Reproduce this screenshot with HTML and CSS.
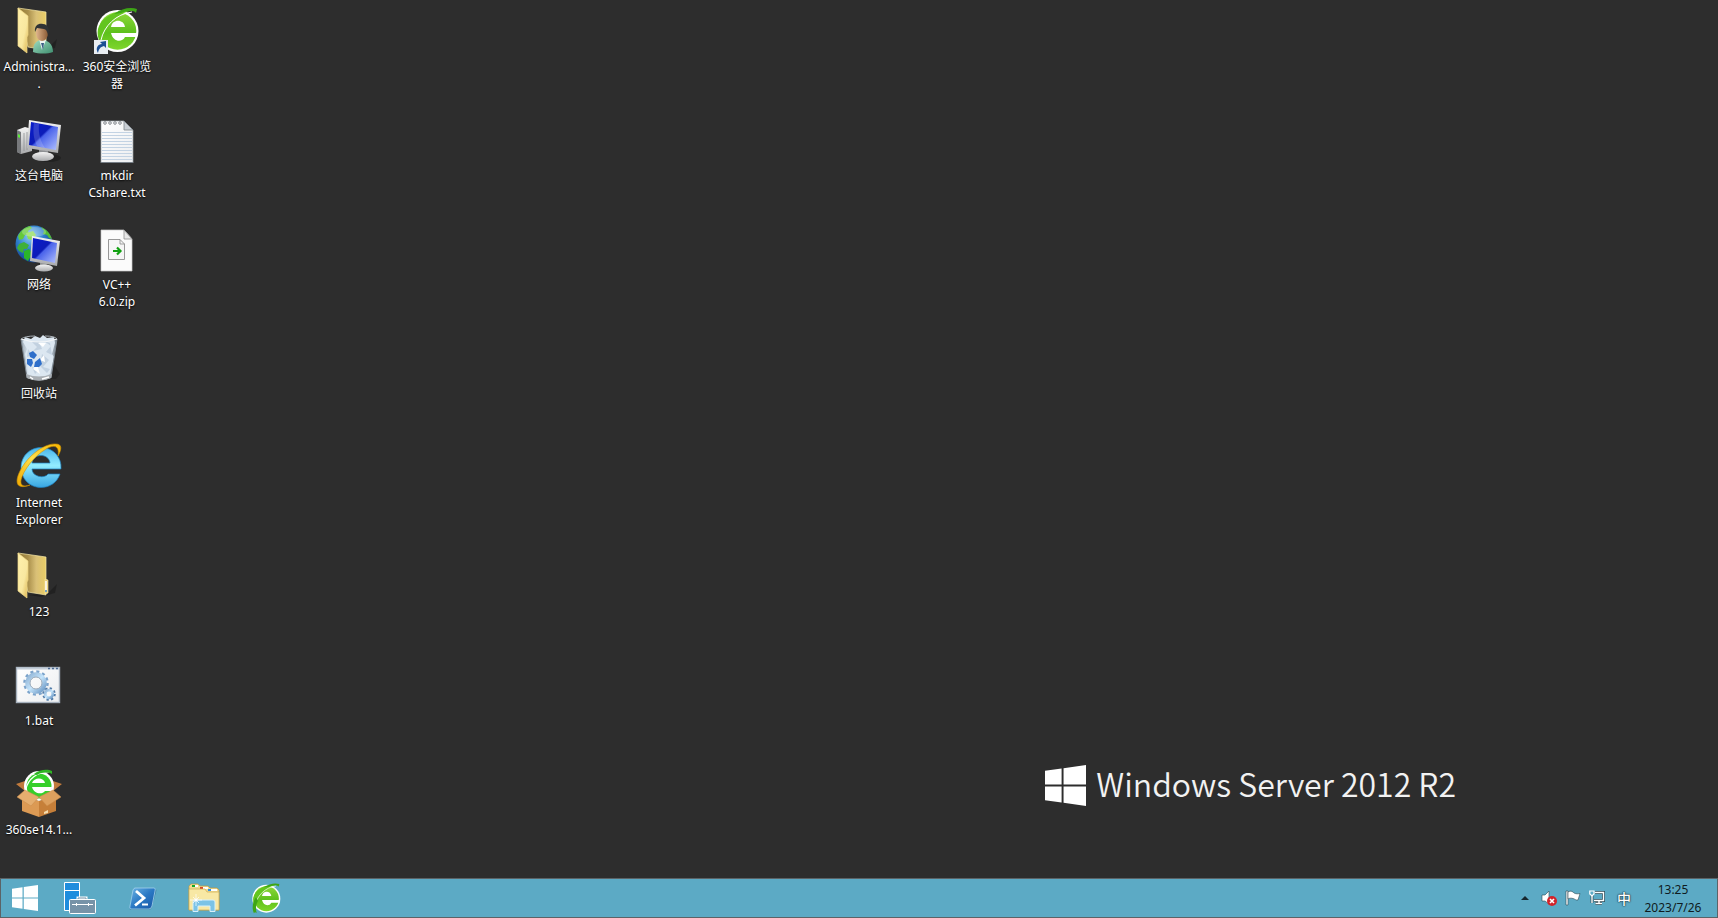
FILE: index.html
```
<!DOCTYPE html>
<html lang="zh-CN">
<head>
  <meta charset="UTF-8">
  <meta name="viewport" content="width=device-width, initial-scale=1.0">
  <title>Windows Server 2012 R2</title>
  <link rel="stylesheet" href="styles.css">
</head>
<body>

<!-- Shared gradients and symbols -->
<svg width="0" height="0" aria-hidden="true">
  <defs>
    <linearGradient id="folderFront" x1="0" y1="0" x2="1" y2="1">
      <stop offset="0" stop-color="#fff0ac"/><stop offset=".6" stop-color="#f9e8a0"/><stop offset="1" stop-color="#dcb54e"/>
    </linearGradient>
    <linearGradient id="folderBack" x1="0" y1="0" x2="1" y2="0">
      <stop offset="0" stop-color="#8f7838"/><stop offset=".35" stop-color="#a98f4a"/><stop offset=".65" stop-color="#d9c077"/><stop offset="1" stop-color="#e9cd66"/>
    </linearGradient>
    <linearGradient id="screen" x1="0" y1="0" x2="1" y2="1">
      <stop offset="0" stop-color="#0a1ccc"/><stop offset=".45" stop-color="#0c1cb8"/><stop offset=".5" stop-color="#4a63ea"/><stop offset="1" stop-color="#b3c2ff"/>
    </linearGradient>
    <linearGradient id="metal" x1="0" y1="0" x2="0" y2="1">
      <stop offset="0" stop-color="#f4f4f4"/><stop offset="1" stop-color="#a9aaac"/>
    </linearGradient>
    <linearGradient id="green" x1="0" y1="0" x2="0" y2="1">
      <stop offset="0" stop-color="#8ed83a"/><stop offset=".55" stop-color="#5dc01c"/><stop offset="1" stop-color="#7fd62c"/>
    </linearGradient>
    <linearGradient id="ieBlue" x1="0" y1="0" x2="0" y2="1">
      <stop offset="0" stop-color="#49b5ea"/><stop offset=".45" stop-color="#92ecff"/><stop offset="1" stop-color="#38a6e2"/>
    </linearGradient>
    <linearGradient id="ieGold" x1="1" y1="0" x2="0" y2="1">
      <stop offset="0" stop-color="#f7b500"/><stop offset=".5" stop-color="#ffe04a"/><stop offset="1" stop-color="#f0a800"/>
    </linearGradient>
    <radialGradient id="globe" cx=".4" cy=".3" r=".7">
      <stop offset="0" stop-color="#8fd0f5"/><stop offset=".5" stop-color="#2f7fcc"/><stop offset="1" stop-color="#123f8c"/>
    </radialGradient>
    <linearGradient id="gear" x1="0" y1="0" x2="1" y2="1">
      <stop offset="0" stop-color="#8fb2d4"/><stop offset=".5" stop-color="#c4e4fb"/><stop offset="1" stop-color="#6a97c4"/>
    </linearGradient>
    <linearGradient id="paper" x1="0" y1="0" x2="1" y2="1">
      <stop offset="0" stop-color="#ffffff"/><stop offset="1" stop-color="#eceef0"/>
    </linearGradient>
    <linearGradient id="bin" x1="0" y1="0" x2="1" y2="0">
      <stop offset="0" stop-color="#9aa7b3"/><stop offset=".2" stop-color="#d9e4ee"/><stop offset=".75" stop-color="#c9d7e4"/><stop offset="1" stop-color="#76818b"/>
    </linearGradient>
    <linearGradient id="psBlue" x1="0" y1="0" x2="1" y2="1">
      <stop offset="0" stop-color="#6cb4e4"/><stop offset=".5" stop-color="#2a78c4"/><stop offset="1" stop-color="#1a56a4"/>
    </linearGradient>
    <linearGradient id="skin" x1="0" y1="0" x2="1" y2="0">
      <stop offset="0" stop-color="#e0b58c"/><stop offset="1" stop-color="#8a5a34"/>
    </linearGradient>
    <linearGradient id="shirt" x1="0" y1="0" x2="1" y2="1">
      <stop offset="0" stop-color="#9fdcc0"/><stop offset="1" stop-color="#3f8f70"/>
    </linearGradient>

    <symbol id="folder" viewBox="0 0 48 48">
      <path d="M13 44 L33 42 L42 33 L40 42 L26 46Z" fill="#000" opacity=".25"/>
      <path d="M3 2 L31 6 V44 L13 41Z" fill="url(#folderBack)" stroke="#f5e6a6" stroke-width=".7"/>
      <path d="M3 2 L13 10 V29 L12 31 V47 L3 40Z" fill="url(#folderFront)" stroke="#f1d987" stroke-width=".7"/>
    </symbol>

    <symbol id="browser360" viewBox="0 0 48 48">
      <circle cx="24.500" cy="25" r="21" fill="#fff"/>
      <circle cx="24.500" cy="25" r="18.800" fill="url(#green)"/>
      <path d="M18 21 C19 12.500 31 12.500 32 21Z" fill="#fff"/>
      <path d="M18 27 H45 Q45 29 44 31 H32 C29 37 20 36 18 27Z" fill="#fff"/>
      <path d="M5 23 C9 10 25 3 42 4 C31 5 21 12 15 19 C11 24 8 32 9 39 C5 34 4 28 5 23Z" fill="#63c51f"/>
      <path d="M8 34 C11 20 23 8 39 6" fill="none" stroke="#fff" stroke-width="1"/>
      <path d="M21 8 C29 2 38 1 44 3 L43 7 C41 4 35 4 28 7Z" fill="#3ea516"/>
    </symbol>

    <symbol id="winflag" viewBox="0 0 42 42">
      <path d="M0 6 L17 3.600 V20 H0Z M19 3.300 L42 0 V20 H19Z M0 22 H17 V38.400 L0 36Z M19 22 H42 V42 L19 38.700Z" fill="#fff"/>
    </symbol>
  </defs>
</svg>

<main class="desktop">
  <div class="icons">
    <a class="icon" href="#administrator">
      <svg viewBox="0 0 48 48" aria-hidden="true">
        <use href="#folder"/>
        <path d="M18 46 C18 37 22 34 27 34 C33 34 38 38 38 46 C32 48 24 48 18 46Z" fill="url(#shirt)"/>
        <path d="M24 33 L27 44 L31 34Z" fill="#eef5f2"/>
        <path d="M26 37 L28 44 L29 37Z" fill="#3c5e86"/>
        <ellipse cx="27" cy="27" rx="6" ry="8" fill="url(#skin)"/>
        <path d="M20 26 C19 19 24 17 28 18 C33 18 35 23 33 29 C32 25 31 23 29 23 L22 22Z" fill="#303335"/>
      </svg>
      <span class="label">Administra...<br>.</span>
    </a>
    <a class="icon" href="#computer">
      <svg viewBox="0 0 48 48" aria-hidden="true">
        <ellipse cx="34" cy="43" rx="12" ry="4" fill="#000" opacity=".25"/>
        <path d="M2 15 L10 12 L17 14 V36 L6 39 L2 37Z" fill="url(#metal)"/>
        <path d="M2 15 L6 17 V39 L2 37Z" fill="#77797c"/>
        <path d="M3 19 L5 20 V23 L3 22Z" fill="#5cf03a"/>
        <path d="M9 18 V36 M12 17 V35" stroke="#8d8f92" stroke-width=".8"/>
        <path d="M24 34 L33 36 L32 42 H24Z" fill="#8e9093"/>
        <ellipse cx="28" cy="41.500" rx="11" ry="4.500" fill="url(#metal)"/>
        <path d="M14 5 L46 10 L43 38 L12 33Z" fill="url(#metal)"/>
        <path d="M16 7 L43 12 L41 35 L14 30Z" fill="url(#screen)"/>
        <path d="M24 9 C23 19 26 27 30 33 L22 31 C18 23 18 15 19 8Z" fill="#fff" opacity=".16"/>
      </svg>
      <span class="label">这台电脑</span>
    </a>
    <a class="icon" href="#network">
      <svg viewBox="0 0 48 48" aria-hidden="true">
        <circle cx="19" cy="20" r="18.500" fill="url(#globe)"/>
        <path d="M3 12 C6 6 10 3 15 2 L17 4 L13 7 L14 10 L10 11 L8 15 L4 16Z" fill="#65c83a"/>
        <path d="M26 3 C31 5 35 9 37 15 L34 14 L32 11 L28 10 L29 7Z" fill="#54ba36"/>
        <path d="M4 20 L9 18 L14 21 L12 25 L9 25 L8 29 L4 27 L2 24Z" fill="#3fb03a"/>
        <path d="M9 27 L14 25 L18 30 L14 35 L13 37 L9 34Z" fill="#2bb52b"/>
        <path d="M11 9 L18 7 L21 11 L17 16 L13 15Z" fill="#8fdc5a"/>
        <ellipse cx="19" cy="8" rx="12" ry="5" fill="#fff" opacity=".25"/>
        <path d="M25 37 L32 39 L31 44 H25Z" fill="#8e9093"/>
        <ellipse cx="29" cy="44" rx="9" ry="3.500" fill="url(#metal)"/>
        <path d="M17 12 L45 17 L42 42 L15 37Z" fill="url(#metal)"/>
        <path d="M18 14 L42 19 L40 39 L17 34Z" fill="url(#screen)"/>
      </svg>
      <span class="label">网络</span>
    </a>
    <a class="icon" href="#recycle">
      <svg viewBox="0 0 48 48" aria-hidden="true">
        <path d="M34 46 L38 30 L45 41 L41 46Z" fill="#000" opacity=".2"/>
        <path d="M6 6 L12 45 Q24 50 36 45 L42 6Z" fill="url(#bin)"/>
        <path d="M8 9 L10 4 L16 6 L20 3 L25 5 L28 2 L32 5 L39 4 L40 10 L37 21 L39 24 L35 41 Q24 46 14 41 L10 21 L12 16Z" fill="#dce7f1"/>
        <path d="M16 8 L22 14 L18 18 L27 16 L24 9Z M29 8 L36 13 L31 19 L37 22 L35 10Z M13 16 L17 22 L12 24Z M27 21 L34 27 L28 34 L35 36 L32 40 L25 33Z M17 34 L24 37 L20 41Z" fill="#c2d1e0"/>
        <path d="M23 10 L28 14 L31 10Z M29 22 L25 27 L30 29Z M22 31 L18 36 L25 41Z" fill="#fff"/>
        <path d="M14 20 L18 18 L22 22 L19 26 L15 24Z M12 26 L17 26 L18 30 L16 34 L12 31Z M20 29 L25 25 L27 31 L24 34 L19 34Z" fill="#2f6fca"/>
        <path d="M6 6 L12 45 M42 6 L36 45" stroke="#7d8790" stroke-width="1"/>
        <path d="M6 6 Q24 12 42 6" fill="none" stroke="#f3f6f8" stroke-width="1.200"/>
        <path d="M6 6 Q10 3 20 3 M30 3 Q40 3 42 6" fill="none" stroke="#a9b0b6" stroke-width="1"/>
        <path d="M11 41 Q24 46 37 41 L36 45 Q24 50 12 45Z" fill="#a8adb2"/>
        <path d="M15 44 L18 46 M27 46 L34 44" stroke="#fff" stroke-width="1.500"/>
      </svg>
      <span class="label">回收站</span>
    </a>
    <a class="icon" href="#ie">
      <svg viewBox="0 0 48 48" aria-hidden="true">
        <path d="M46 27 H17 C17 35 30 37 33 32 H45 C42 41 34 45.500 26 45.500 C14 45.500 6 36 6 25.500 C6 14 15 5.500 26 5.500 C38 5.500 47 15 46 27Z M17 21 H35 C34 11 18 11 17 21Z" fill="url(#ieBlue)" stroke="#1d7fbe" stroke-width=".7" fill-rule="evenodd"/>
        <path d="M43 14 C47 7 47 2 41 2 C30 1 13 13 5 29 C-1 41 2 48 15 43 C9 45 5 44 6 38 C8 29 19 14 31 7 C39 2 45 4 43 14Z" fill="url(#ieGold)" stroke="#cf9100" stroke-width=".6"/>
      </svg>
      <span class="label">Internet<br>Explorer</span>
    </a>
    <a class="icon" href="#folder123">
      <svg viewBox="0 0 48 48" aria-hidden="true">
        <use href="#folder"/>
        <path d="M30 28 L33 29 V42 L30 43Z" fill="#e9cf73" stroke="#f8e9ad" stroke-width=".6"/>
        <path d="M31 30 V39" stroke="#fff" stroke-width="1.500"/>
        <circle cx="31" cy="40" r="1" fill="#4a90d8"/>
      </svg>
      <span class="label">123</span>
    </a>
    <a class="icon" href="#bat">
      <svg viewBox="0 0 48 48" aria-hidden="true">
        <rect x="1.500" y="7.500" width="43" height="35" fill="url(#paper)" stroke="#a5b0bc" stroke-width="1.400"/>
        <path d="M2 8.500 H44" stroke="#c4ced9" stroke-width="2"/>
        <path d="M33 8.500 H35 M37 8.500 H39 M41 8.500 H43" stroke="#4c6a93" stroke-width="1.500"/>
        <circle cx="21" cy="23" r="11.500" fill="none" stroke="#7ba3cb" stroke-width="2.500" stroke-dasharray="3 3.020"/>
        <circle cx="21" cy="23" r="8.500" fill="none" stroke="url(#gear)" stroke-width="4.500"/>
        <circle cx="21" cy="23" r="6" fill="none" stroke="#8a9db0" stroke-width=".9"/>
        <circle cx="34" cy="34" r="5.800" fill="#f6f8fa" stroke="#527ca8" stroke-width="2" stroke-dasharray="2.300 2.250"/>
        <circle cx="34" cy="34" r="3.800" fill="#f6f8fa" stroke="url(#gear)" stroke-width="2.800"/>
      </svg>
      <span class="label">1.bat</span>
    </a>
    <a class="icon" href="#setup360">
      <svg viewBox="0 0 48 48" aria-hidden="true">
        <path d="M1 15 L10 12 L20 16 L10 22Z M47 15 L38 12 L28 16 L38 22Z" fill="#c07a3c"/>
        <path d="M10 16 H38 V29 H10Z" fill="#9c5f2b"/>
        <circle cx="24" cy="17" r="15" fill="#fff"/>
        <circle cx="24" cy="17" r="12.500" fill="#35cf2a"/>
        <path d="M17 14 C19 8 29 8 30 14Z M17 18 H37 L36 22 H30 C27 26 19 25 17 18Z" fill="#fff"/>
        <path d="M11 20 C13 10 22 3 34 3" fill="none" stroke="#fff" stroke-width="1.200"/>
        <path d="M19 5 C25 0 33 0 37 2 V5 C33 3 27 3 22 6Z" fill="#2fb524"/>
        <path d="M7 27 L24 32 V48 L7 42Z" fill="#dc9a54"/>
        <path d="M41 27 L24 32 V48 L41 42Z" fill="#c67f39"/>
        <path d="M10 21 L24 28 L16 37 L2 28Z" fill="#e5ae6f" stroke="#c98a48" stroke-width=".5"/>
        <path d="M38 21 L24 28 L32 37 L46 28Z" fill="#dda05e" stroke="#c98a48" stroke-width=".5"/>
        <path d="M29 43 L33 41 V44 L29 45Z" fill="#f4dcae"/>
      </svg>
      <span class="label">360se14.1...</span>
    </a>
    <a class="icon" href="#browser">
      <svg viewBox="0 0 48 48" aria-hidden="true">
        <use href="#browser360"/>
        <rect x="1" y="34" width="14" height="14" fill="#e9edf2"/>
        <path d="M5 47 C2 42 5 38 9 38 L7 36 L13 35 L13 42 L11 40 C7 41 6 43 5 47Z" fill="#1c4f94"/>
      </svg>
      <span class="label">360安全浏览器</span>
    </a>
    <a class="icon" href="#mkdir">
      <svg viewBox="0 0 48 48" aria-hidden="true">
        <path d="M8 6 H31 L40 15 V48 H8Z" fill="url(#paper)" stroke="#9ba3aa" stroke-width=".7"/>
        <path d="M9 17.500 H39 M9 20.500 H39 M9 23.500 H39 M9 26.500 H39 M9 29.500 H39 M9 32.500 H39 M9 35.500 H39 M9 38.500 H39 M9 41.500 H39 M9 44.500 H39" stroke="#c3d3e3" stroke-width="1"/>
        <path d="M31 6 V15 H40Z" fill="#c9cfd5" stroke="#7d858c" stroke-width=".8"/>
        <g fill="none" stroke="#777d82" stroke-width=".9">
          <circle cx="12" cy="8" r="1.300"/><circle cx="17" cy="8" r="1.300"/><circle cx="22" cy="8" r="1.300"/><circle cx="27" cy="8" r="1.300"/>
        </g>
        <path d="M8 47.500 H40" stroke="#777f87" stroke-width="1"/>
      </svg>
      <span class="label">mkdir<br>Cshare.txt</span>
    </a>
    <a class="icon" href="#vczip">
      <svg viewBox="0 0 48 48" aria-hidden="true">
        <path d="M8 6 H31 L39 15 V47 H8Z" fill="#fbfbfb" stroke="#c9c9c9" stroke-width=".7"/>
        <path d="M31 6 V15 H39Z" fill="#e8e8e8" stroke="#8f8f8f" stroke-width=".8"/>
        <path d="M15.500 15.500 H27 L31.500 20 V35.500 H15.500Z" fill="#f6f6f6" stroke="#8c8c8c" stroke-width=".9"/>
        <path d="M27 15.500 V20 H31.500" fill="none" stroke="#8c8c8c" stroke-width=".8"/>
        <path d="M20 27 H27 M24 23.500 L27.500 27 L24 30.500" fill="none" stroke="#10a010" stroke-width="2.200"/>
      </svg>
      <span class="label">VC++<br>6.0.zip</span>
    </a>
  </div>

  <div class="brand">
    <svg class="brand-logo" viewBox="0 0 42 42" aria-hidden="true"><use href="#winflag"/></svg>
    <span class="brand-name">Windows Server 2012 R2</span>
  </div>
</main>

<footer class="taskbar">
  <button class="start" type="button" aria-label="开始">
    <svg width="26" height="26" viewBox="0 0 42 42"><use href="#winflag"/></svg>
  </button>
  <button class="task" type="button" aria-label="服务器管理器">
    <svg width="32" height="32" viewBox="0 0 32 32">
      <path d="M.500 .500 H15.500 V28.500 H.500Z" fill="#1f8ddd" stroke="#fff"/>
      <path d="M0 8.500 H16" stroke="#fff"/>
      <path d="M14 18 V16 H22 V18" fill="none" stroke="#fff" stroke-width="3"/>
      <path d="M14 19 V16 H22 V19" fill="none" stroke="#7290a6" stroke-width="1"/>
      <rect x="5.500" y="17.500" width="26" height="14" rx="1" fill="#7793a8" stroke="#fff"/>
      <path d="M8 22.500 H29 M12.500 21 V24 M24.500 21 V24" stroke="#fff"/>
    </svg>
  </button>
  <button class="task" type="button" aria-label="Windows PowerShell">
    <svg width="32" height="32" viewBox="0 0 32 32">
      <path d="M9 7 H29 Q31 7 30 10 L26 25 Q25 28 23 28 H5 Q3 28 4 25 L7 9 Q8 7 9 7Z" fill="#174f7b" opacity=".45"/>
      <path d="M9 6 H28 Q30 6 29 9 L26 24 Q25 27 23 27 H5 Q3 27 4 24 L7 8 Q8 6 9 6Z" fill="url(#psBlue)" stroke="#a3d3ee" stroke-width=".8"/>
      <path d="M10 9 L18 16 L9 23.500" fill="none" stroke="#fff" stroke-width="2.800"/>
      <path d="M16 22.500 H22" stroke="#fff" stroke-width="2"/>
    </svg>
  </button>
  <button class="task" type="button" aria-label="文件资源管理器">
    <svg width="32" height="32" viewBox="0 0 32 32">
      <path d="M1 28 V4 L3 2 H10 L12 4 H20 L22 6 H29 L31 8 V28Z" fill="#f0dc92" stroke="#c09a3e" stroke-width=".7"/>
      <path d="M4 3 H10 V5 H4Z" fill="#fff"/><path d="M4 3 H7 V5 H4Z" fill="#14a82a"/>
      <path d="M12 5 H20 V7 H12Z" fill="#fff"/><path d="M12 5 H15 V7 H12Z" fill="#d84624"/>
      <path d="M20 7 H29 V9 H20Z" fill="#fff"/><path d="M20 7 H23 V9 H20Z" fill="#2d91e5"/>
      <path d="M1 7 H17 L19 10 H31 V28 H1Z" fill="#f8e8a4" stroke="#d0ae55" stroke-width=".7"/>
      <path d="M5 29.500 V20 Q5 18 7 18 H25 Q27 18 27 20 V29.500 H22 V24 H10 V29.500Z" fill="#7bc3e6" stroke="#d7f0fa" stroke-width="1"/>
      <path d="M8 12 V24 M2 18 H14 M5 15 L11 21 M11 15 L5 21" stroke="#fff" stroke-width=".7"/>
      <circle cx="8" cy="18" r="1.500" fill="#fff"/>
    </svg>
  </button>
  <button class="task" type="button" aria-label="360安全浏览器">
    <svg width="32" height="32" viewBox="0 0 48 48">
      <use href="#browser360"/>
      <path d="M9 23 C3 31 3 41 6 47 C7 45 8 45 10 47 C8 39 9 34 12 28Z" fill="#3ea516"/>
    </svg>
  </button>

  <div class="tray">
    <button class="tray-item" type="button" aria-label="显示隐藏的图标">
      <svg width="8" height="4" viewBox="0 0 8 4"><path d="M0 4 L4 0 L8 4Z" fill="#16272e"/></svg>
    </button>
    <button class="tray-item" type="button" aria-label="音量">
      <svg width="16" height="16" viewBox="0 0 16 16">
        <path d="M1 5 H4 L8 1 V14 L4 11 H1Z" fill="#fff" stroke="#2c4853" stroke-width=".6"/>
        <circle cx="11" cy="11" r="5" fill="#d2232a"/>
        <path d="M9 9 L13 13 M13 9 L9 13" stroke="#fff" stroke-width="1.600"/>
      </svg>
    </button>
    <button class="tray-item" type="button" aria-label="操作中心">
      <svg width="16" height="16" viewBox="0 0 16 16">
        <path d="M1 1 H3 V15 H1Z" fill="#fff" stroke="#2c4853" stroke-width=".6"/>
        <path d="M3 2 C6 0 8 2 9 3 C11 4 13 4 15 3.500 L13 10 C11 10.500 10 9 8 8.500 C6 8 4 8 3 9Z" fill="#fff" stroke="#2c4853" stroke-width=".6"/>
      </svg>
    </button>
    <button class="tray-item" type="button" aria-label="网络">
      <svg width="16" height="16" viewBox="0 0 16 16">
        <g fill="none" stroke="#2c4853" stroke-width="2.800"><path d="M6 2.500 H14.500 V10.500 H5 M10 11 V13.500 M6.500 13.500 H13 M3 5 V13"/></g>
        <g fill="none" stroke="#fff" stroke-width="1.400"><path d="M6 2.500 H14.500 V10.500 H5 M10 11 V13.500 M6.500 13.500 H13 M3 5 V13"/></g>
        <path d="M.800 1 H5 V4 L3 6 L.800 4Z" fill="#5caac5" stroke="#fff" stroke-width="1.200"/>
      </svg>
    </button>
    <button class="tray-item ime" type="button">中</button>
    <button class="clock" type="button"><span>13:25</span><span>2023/7/26</span></button>
  </div>
</footer>

</body>
</html>
```
FILE: styles.css
```
* {
  box-sizing: border-box;
}

body {
  margin: 0;
  height: 100vh;
  display: flex;
  flex-direction: column;
  overflow: hidden;
  background-color: #2d2d2d;
  font-family: "Noto Sans", "Noto Sans CJK SC", sans-serif;
  font-size: 12px;
}

button {
  border: 0;
  padding: 0;
  background: none;
  font: inherit;
  color: inherit;
}

/* Desktop */
.desktop {
  flex: 1;
  min-height: 0;
  display: flex;
  justify-content: space-between;
}

.icons {
  display: grid;
  grid-auto-flow: column;
  grid-template-rows: repeat(auto-fill, 109px);
  grid-auto-columns: 78px;
}

.icon {
  display: flex;
  flex-direction: column;
  align-items: center;
  gap: 4px;
  padding-top: 6px;
  color: #fff;
  text-decoration: none;
}

.icon svg {
  width: 48px;
  height: 48px;
}

.label {
  max-width: 74px;
  line-height: 17px;
  text-align: center;
  text-shadow: 0 1px 2px #000;
}

/* Wallpaper logo */
.brand {
  align-self: flex-end;
  display: flex;
  align-items: center;
  gap: 10px;
  margin: 0 262px 69px 0;
}

.brand-logo {
  width: 41px;
  height: 41px;
}

.brand-name {
  padding-bottom: 4px;
  font-family: "Noto Sans CJK SC", sans-serif;
  font-size: 32px;
  font-weight: 350;
  line-height: 44px;
  white-space: nowrap;
  color: #f2f2f2;
}

/* Taskbar */
.taskbar {
  height: 40px;
  display: flex;
  background-color: #5caac5;
  border: 1px solid #5b6367;
}

.start,
.task {
  display: flex;
  align-items: center;
  justify-content: center;
}

.start {
  width: 48px;
}

.task {
  width: 62px;
}

.tray {
  display: flex;
  margin-left: auto;
  padding-right: 10px;
  color: #0f1b20;
}

.tray-item {
  width: 24px;
  display: flex;
  align-items: center;
  justify-content: center;
}

.ime {
  width: 30px;
  font-size: 14px;
  font-weight: 500;
  color: #fff;
  text-shadow: 0 0 1px #1d343d, 0 0 1px #1d343d, 0 0 2px #1d343d;
}

.clock {
  width: 68px;
  padding-top: 2px;
  display: flex;
  flex-direction: column;
  align-items: center;
  justify-content: center;
  line-height: 18px;
}
```
